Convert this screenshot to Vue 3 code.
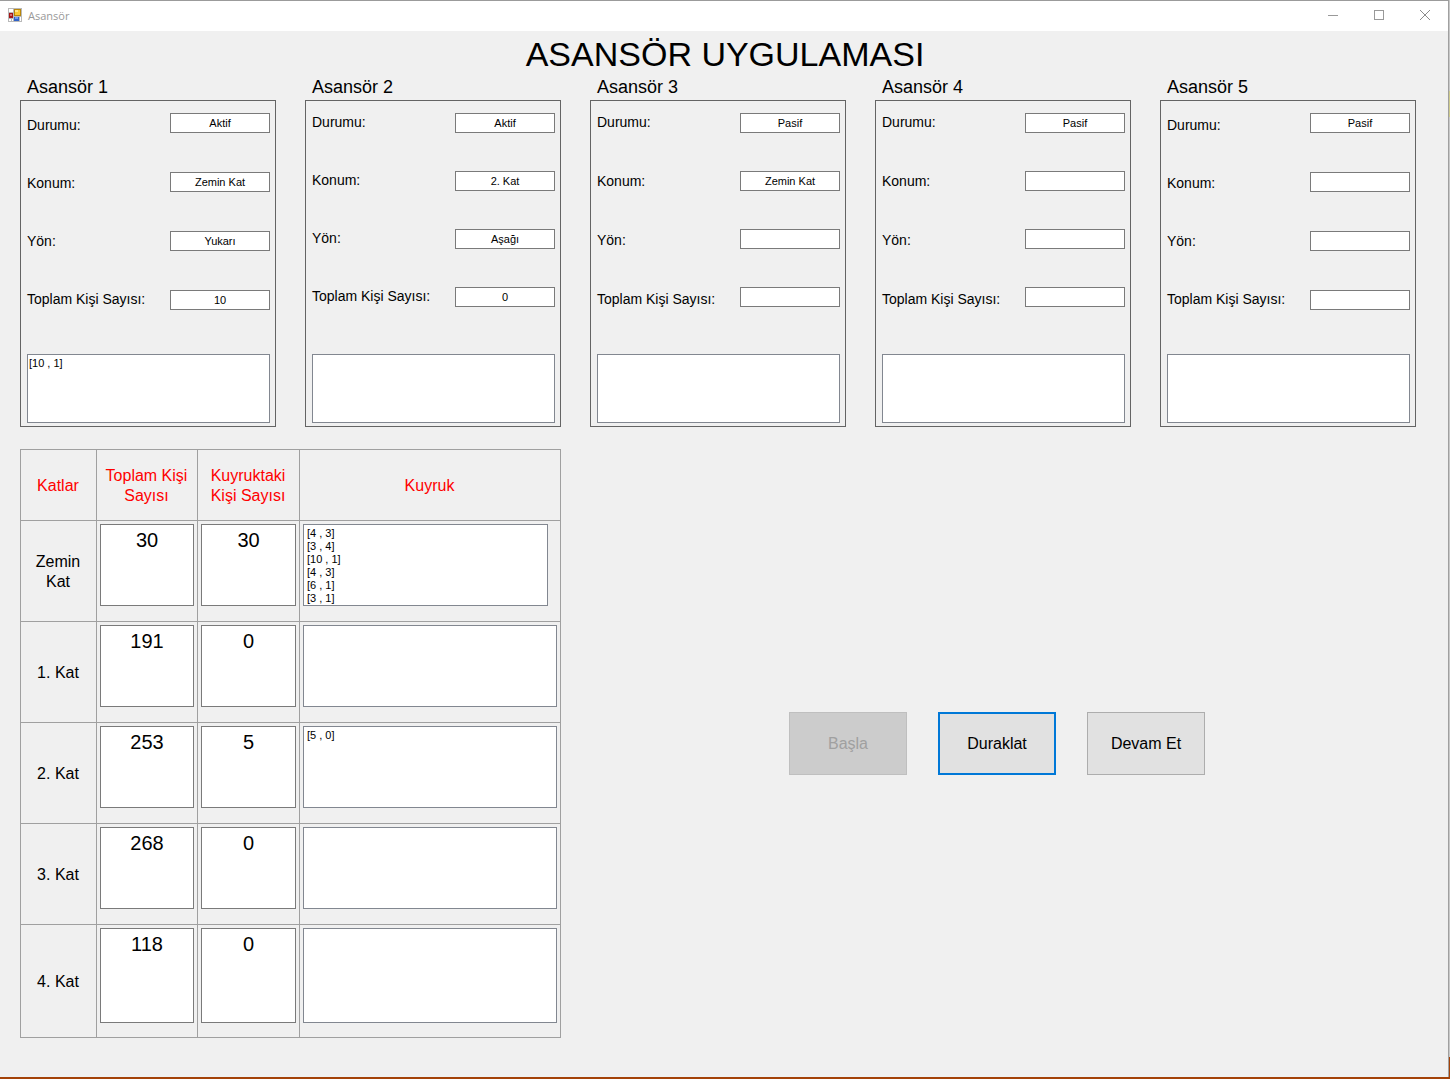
<script setup>
const rowNames = ['Durumu:', 'Konum:', 'Yön:', 'Toplam Kişi Sayısı:']

const elevators = [
  { id: 1, labels: 'low', fields: 'wide', values: ['Aktif', 'Zemin Kat', 'Yukarı', '10'], load: '[10 , 1]' },
  { id: 2, labels: '', fields: '', values: ['Aktif', '2. Kat', 'Aşağı', '0'], load: '' },
  { id: 3, labels: 'wide', fields: '', values: ['Pasif', 'Zemin Kat', '', ''], load: '' },
  { id: 4, labels: 'wide', fields: '', values: ['Pasif', '', '', ''], load: '' },
  { id: 5, labels: 'low', fields: 'wide', values: ['Pasif', '', '', ''], load: '' }
]

const floors = [
  { name: 'Zemin Kat', total: '30', waiting: '30', queue: '[4 , 3]\n[3 , 4]\n[10 , 1]\n[4 , 3]\n[6 , 1]\n[3 , 1]', size: 'short' },
  { name: '1. Kat', total: '191', waiting: '0', queue: '' },
  { name: '2. Kat', total: '253', waiting: '5', queue: '[5 , 0]' },
  { name: '3. Kat', total: '268', waiting: '0', queue: '' },
  { name: '4. Kat', total: '118', waiting: '0', queue: '', size: 'tall' }
]
</script>

<template>
  <div class="desktop">
    <div class="window">
      <header class="titlebar">
        <svg class="app-icon" width="14" height="14" viewBox="0 0 14 14" shape-rendering="crispEdges" aria-hidden="true">
          <rect width="14" height="14" fill="#b9b9b9" />
          <rect x="1" y="1" width="4" height="3" fill="#fff" />
          <rect x="1" y="11" width="2" height="2" fill="#fff" />
          <rect x="4" y="11" width="1" height="2" fill="#fff" />
          <rect x="12" y="9" width="1" height="4" fill="#fff" />
          <rect x="1" y="5" width="4" height="5" fill="#a51416" />
          <rect x="2" y="6" width="2" height="2" fill="#d97070" />
          <rect x="6" y="1" width="7" height="7" fill="#b8860b" />
          <rect x="7" y="2" width="5" height="5" fill="#f9c832" />
          <rect x="7" y="2" width="3" height="2" fill="#ffe38a" />
          <rect x="6" y="9" width="5" height="4" fill="#2f62c8" />
          <rect x="7" y="9" width="3" height="2" fill="#6f9df0" />
        </svg>
        <span class="caption">Asansör</span>
        <div class="window-controls">
          <button type="button" aria-label="Simge durumuna küçült">
            <svg width="10" height="10" viewBox="0 0 10 10" shape-rendering="crispEdges"><path d="M0 5.5H10" stroke="#999" /></svg>
          </button>
          <button type="button" aria-label="Ekranı kapla">
            <svg width="10" height="10" viewBox="0 0 10 10" shape-rendering="crispEdges"><path d="M.5 .5H9.5V9.5H.5Z" fill="none" stroke="#999" /></svg>
          </button>
          <button type="button" aria-label="Kapat">
            <svg width="10" height="10" viewBox="0 0 10 10"><path d="M0 0L10 10M10 0L0 10" stroke="#8c8c8c" /></svg>
          </button>
        </div>
      </header>

      <main>
        <h1>ASANSÖR UYGULAMASI</h1>

        <div class="elevators">
          <section v-for="e in elevators" :key="e.id">
            <h2>Asansör {{ e.id }}</h2>
            <div class="panel">
              <div class="status">
                <div class="labels" :class="e.labels">
                  <label v-for="(name, i) in rowNames" :key="name" :for="`e${e.id}-${i}`">{{ name }}</label>
                </div>
                <div class="fields" :class="e.fields">
                  <input v-for="(value, i) in e.values" :id="`e${e.id}-${i}`" :key="i" type="text" :value="value" readonly />
                </div>
              </div>
              <textarea class="load" :value="e.load" :aria-label="`Asansör ${e.id} yolcuları`" readonly></textarea>
            </div>
          </section>
        </div>

        <div class="lower">
          <table>
            <colgroup>
              <col class="c-floor" />
              <col class="c-total" />
              <col class="c-waiting" />
              <col class="c-queue" />
            </colgroup>
            <thead>
              <tr>
                <th scope="col">Katlar</th>
                <th scope="col">Toplam Kişi Sayısı</th>
                <th scope="col">Kuyruktaki Kişi Sayısı</th>
                <th scope="col">Kuyruk</th>
              </tr>
            </thead>
            <tbody>
              <tr v-for="f in floors" :key="f.name" :class="f.size">
                <th scope="row">{{ f.name }}</th>
                <td><textarea class="count" :value="f.total" :aria-label="`${f.name} toplam kişi sayısı`" readonly></textarea></td>
                <td><textarea class="count" :value="f.waiting" :aria-label="`${f.name} kuyruktaki kişi sayısı`" readonly></textarea></td>
                <td><textarea class="queue" :value="f.queue" :aria-label="`${f.name} kuyruk`" readonly></textarea></td>
              </tr>
            </tbody>
          </table>

          <div class="actions">
            <button type="button" disabled>Başla</button>
            <button type="button" class="default">Duraklat</button>
            <button type="button">Devam Et</button>
          </div>
        </div>
      </main>
    </div>
  </div>
</template>

<style>
body {
  margin: 0;
}
</style>

<style scoped>
* {
  box-sizing: border-box;
}

.desktop {
  min-height: 100vh;
  display: flex;
  padding-right: 1px;
  border-bottom: 2px solid #a34208;
  background: linear-gradient(#c8c8c8 91px, #cfcb8c 91px, #cfcb8c 117px, #c8c8c8 117px, #c8c8c8 calc(100% - 20px), #a34208 calc(100% - 20px));
  font-family: "Liberation Sans", Arial, sans-serif;
  color: #000;
}

.window {
  flex: 1;
  min-width: 0;
  background: #f0f0f0;
  border-top: 1px solid #9b9b9b;
  border-right: 1px solid #a0a0a0;
}

.titlebar {
  height: 30px;
  display: flex;
  align-items: center;
  padding: 0 0 2px 8px;
  background: #fff;
}

.caption {
  margin-left: 6px;
  padding-top: 2px;
  font: 11px/16px "Open Sans", "Noto Sans", sans-serif;
  color: #999;
}

.window-controls {
  display: flex;
  margin-left: auto;
}

.window-controls button {
  width: 46px;
  height: 28px;
  display: grid;
  place-items: center;
  padding: 0;
  border: 0;
  background: none;
}

main {
  padding: 4px 32px 39px 20px;
}

h1 {
  margin: 0;
  padding: 0 0 2px 14px;
  font-size: 34px;
  line-height: 38px;
  font-weight: 400;
  text-align: center;
}

.elevators {
  display: grid;
  grid-template-columns: repeat(5, 1fr);
  gap: 29px;
}

h2 {
  margin: 0;
  padding-left: 7px;
  font-size: 18px;
  line-height: 25px;
  font-weight: 400;
}

.panel {
  border: 1px solid #646464;
  padding: 0 5px 3px 6px;
}

.status {
  height: 253px;
  display: flex;
  justify-content: space-between;
}

.labels,
.fields {
  display: grid;
  grid-auto-rows: 58px;
  align-content: start;
  align-items: start;
}

.labels {
  padding-top: 13px;
}

.labels.low {
  padding-top: 16px;
}

.fields {
  padding-top: 12px;
}

.labels.wide,
.fields.wide {
  grid-auto-rows: 59px;
}

label {
  font-size: 14px;
  line-height: 16px;
  white-space: nowrap;
}

input,
textarea {
  display: block;
  margin: 0;
  border: 1px solid #7a7a7a;
  border-radius: 0;
  background: #fff;
  color: #000;
  font-family: inherit;
  font-size: 11px;
  line-height: 13px;
  resize: none;
  overflow: hidden;
  outline: 0;
}

input {
  width: 100px;
  height: 20px;
  padding: 0 2px 1px;
  text-align: center;
}

textarea {
  width: 100%;
}

.load {
  height: 69px;
  padding: 2px 1px;
  border-color: #828790;
}

.lower {
  display: flex;
  align-items: center;
  gap: 17px;
  margin-top: 22px;
}

table {
  flex: none;
  width: 541px;
  table-layout: fixed;
  border-collapse: separate;
  border-spacing: 0;
  border: solid #a0a0a0;
  border-width: 1px 0 0 1px;
}

.c-floor {
  width: 76px;
}

.c-total {
  width: 101px;
}

.c-waiting {
  width: 102px;
}

.c-queue {
  width: 261px;
}

th,
td {
  padding: 3px;
  border: solid #a0a0a0;
  border-width: 0 1px 1px 0;
}

th {
  padding: 5px 4px 3px 3px;
  font-size: 16px;
  line-height: 20px;
  font-weight: 400;
  text-align: center;
}

td {
  vertical-align: top;
}

thead th {
  height: 71px;
  color: #f00;
}

tbody tr {
  height: 101px;
}

tbody tr.tall {
  height: 113px;
}

td textarea {
  height: 82px;
}

.tall textarea {
  height: 95px;
}

.count {
  padding: 4px 0;
  font-size: 20px;
  line-height: 23px;
  text-align: center;
}

.queue {
  padding: 2px 3px;
  border-color: #828790;
}

.short .queue {
  width: 245px;
}

.actions {
  flex: 1;
  display: flex;
  justify-content: center;
  gap: 31px;
}

.actions button {
  width: 118px;
  height: 63px;
  padding: 0;
  border: 1px solid #adadad;
  background: #e1e1e1;
  color: #000;
  font-family: inherit;
  font-size: 16px;
  line-height: 20px;
}

.actions button.default {
  border: 2px solid #0078d7;
}

.actions button:disabled {
  border-color: #bfbfbf;
  background: #ccc;
  color: #a0a0a0;
}
</style>
